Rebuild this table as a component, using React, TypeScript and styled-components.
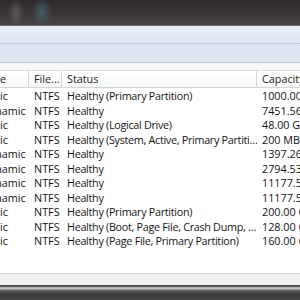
import React from 'react';
import styled, { createGlobalStyle } from 'styled-components';

const GlobalStyle = createGlobalStyle`
  html, body {
    margin: 0;
    padding: 0;
    background: #ffffff;
  }
  body {
    font-family: 'Open Sans', 'Noto Sans', sans-serif;
  }
`;

const Window = styled.div`
  width: 300px;
  height: 300px;
  display: flex;
  flex-direction: column;
  overflow: hidden;
  background: #ffffff;
`;

const TitleBar = styled.div`
  height: 25px;
  flex: none;
  background:
    radial-gradient(ellipse 10px 14px at 42px 12px, rgba(70, 110, 120, 0.7), transparent),
    radial-gradient(ellipse 8px 14px at 16px 12px, rgba(120, 120, 120, 0.5), transparent),
    linear-gradient(to bottom, #2e2a2c 0%, #3e383b 60%, #4a4446 100%);
  border-bottom: 1px solid #6e6a70;
`;

const Band = styled.div<{ $top: string; $bottom: string; $h: number }>`
  height: ${(p) => p.$h}px;
  flex: none;
  background: linear-gradient(to bottom, ${(p) => p.$top}, ${(p) => p.$bottom});
  border-bottom: 1px solid #bcc8d8;
`;

const Gap = styled.div`
  height: 7px;
  flex: none;
  background: #f7f7f7;
`;

const ListView = styled.div`
  flex: 1;
  overflow: hidden;
  display: flex;
  flex-direction: column;
`;

/* list is scrolled a little to the right, so the Type column is clipped */
const Scroller = styled.div`
  margin-left: -23px;
  display: flex;
  flex-direction: column;
`;

const Grid = styled.div`
  display: grid;
  grid-template-columns: 52px 33px 195px 80px;
`;

const HeaderCell = styled.div`
  height: 18px;
  box-sizing: border-box;
  border-top: 1px solid #dcdcdc;
  border-bottom: 1px solid #d5d5d5;
  border-right: 1px solid #d5d5d5;
  background: linear-gradient(to bottom, #ffffff, #f6f7f8);
  padding-left: 5px;
  font-size: 10.8px;
  line-height: 16px;
  color: #1e1e1e;
  white-space: nowrap;
  overflow: hidden;
`;

const Cell = styled.div<{ $tight?: boolean }>`
  height: 14.5px;
  padding-left: 5px;
  font-size: 10.8px;
  line-height: 14.5px;
  letter-spacing: ${(p) => (p.$tight ? '-0.3px' : '0')};
  color: #141414;
  white-space: nowrap;
  overflow: hidden;
`;

const FirstRowSpacer = styled.div`
  height: 1px;
`;

const StatusStrip = styled.div`
  height: 11px;
  flex: none;
  background: #f0f0f0;
  border-top: 1px solid #d6d6d6;
`;

const Taskbar = styled.div`
  height: 15px;
  flex: none;
  background: linear-gradient(
    to bottom,
    #555555 0px,
    #555555 2px,
    #b0b0b0 2px,
    #c4c4c4 4px,
    #666666 5px,
    #383838 9px,
    #454545 15px
  );
`;

const rows = [
  ['Basic', 'NTFS', 'Healthy (Primary Partition)', '1000.00 GB'],
  ['Dynamic', 'NTFS', 'Healthy', '7451.56 GB'],
  ['Basic', 'NTFS', 'Healthy (Logical Drive)', '48.00 GB'],
  ['Basic', 'NTFS', 'Healthy (System, Active, Primary Partiti…', '200 MB'],
  ['Dynamic', 'NTFS', 'Healthy', '1397.26 GB'],
  ['Dynamic', 'NTFS', 'Healthy', '2794.53 GB'],
  ['Dynamic', 'NTFS', 'Healthy', '11177.57 GB'],
  ['Dynamic', 'NTFS', 'Healthy', '11177.57 GB'],
  ['Basic', 'NTFS', 'Healthy (Primary Partition)', '200.00 GB'],
  ['Basic', 'NTFS', 'Healthy (Boot, Page File, Crash Dump, …', '128.00 GB'],
  ['Basic', 'NTFS', 'Healthy (Page File, Primary Partition)', '160.00 GB'],
];

const headers = ['Type', 'File...', 'Status', 'Capacity'];

const App = () => {
  return (
    <Window>
      <GlobalStyle />
      <TitleBar />
      <Band $h={17} $top="#ebf0f7" $bottom="#dee6f1" />
      <Band $h={18} $top="#dae3ef" $bottom="#e0e8f2" />
      <Gap />
      <ListView>
        <Scroller>
          <Grid>
            {headers.map((h) => (
              <HeaderCell key={h}>{h}</HeaderCell>
            ))}
          </Grid>
          <FirstRowSpacer />
          <Grid>
            {rows.map((r, i) => (
              <React.Fragment key={i}>
                <Cell>{r[0]}</Cell>
                <Cell>{r[1]}</Cell>
                <Cell $tight>{r[2]}</Cell>
                <Cell>{r[3]}</Cell>
              </React.Fragment>
            ))}
          </Grid>
        </Scroller>
      </ListView>
      <StatusStrip />
      <Taskbar />
    </Window>
  );
};

export default App;
